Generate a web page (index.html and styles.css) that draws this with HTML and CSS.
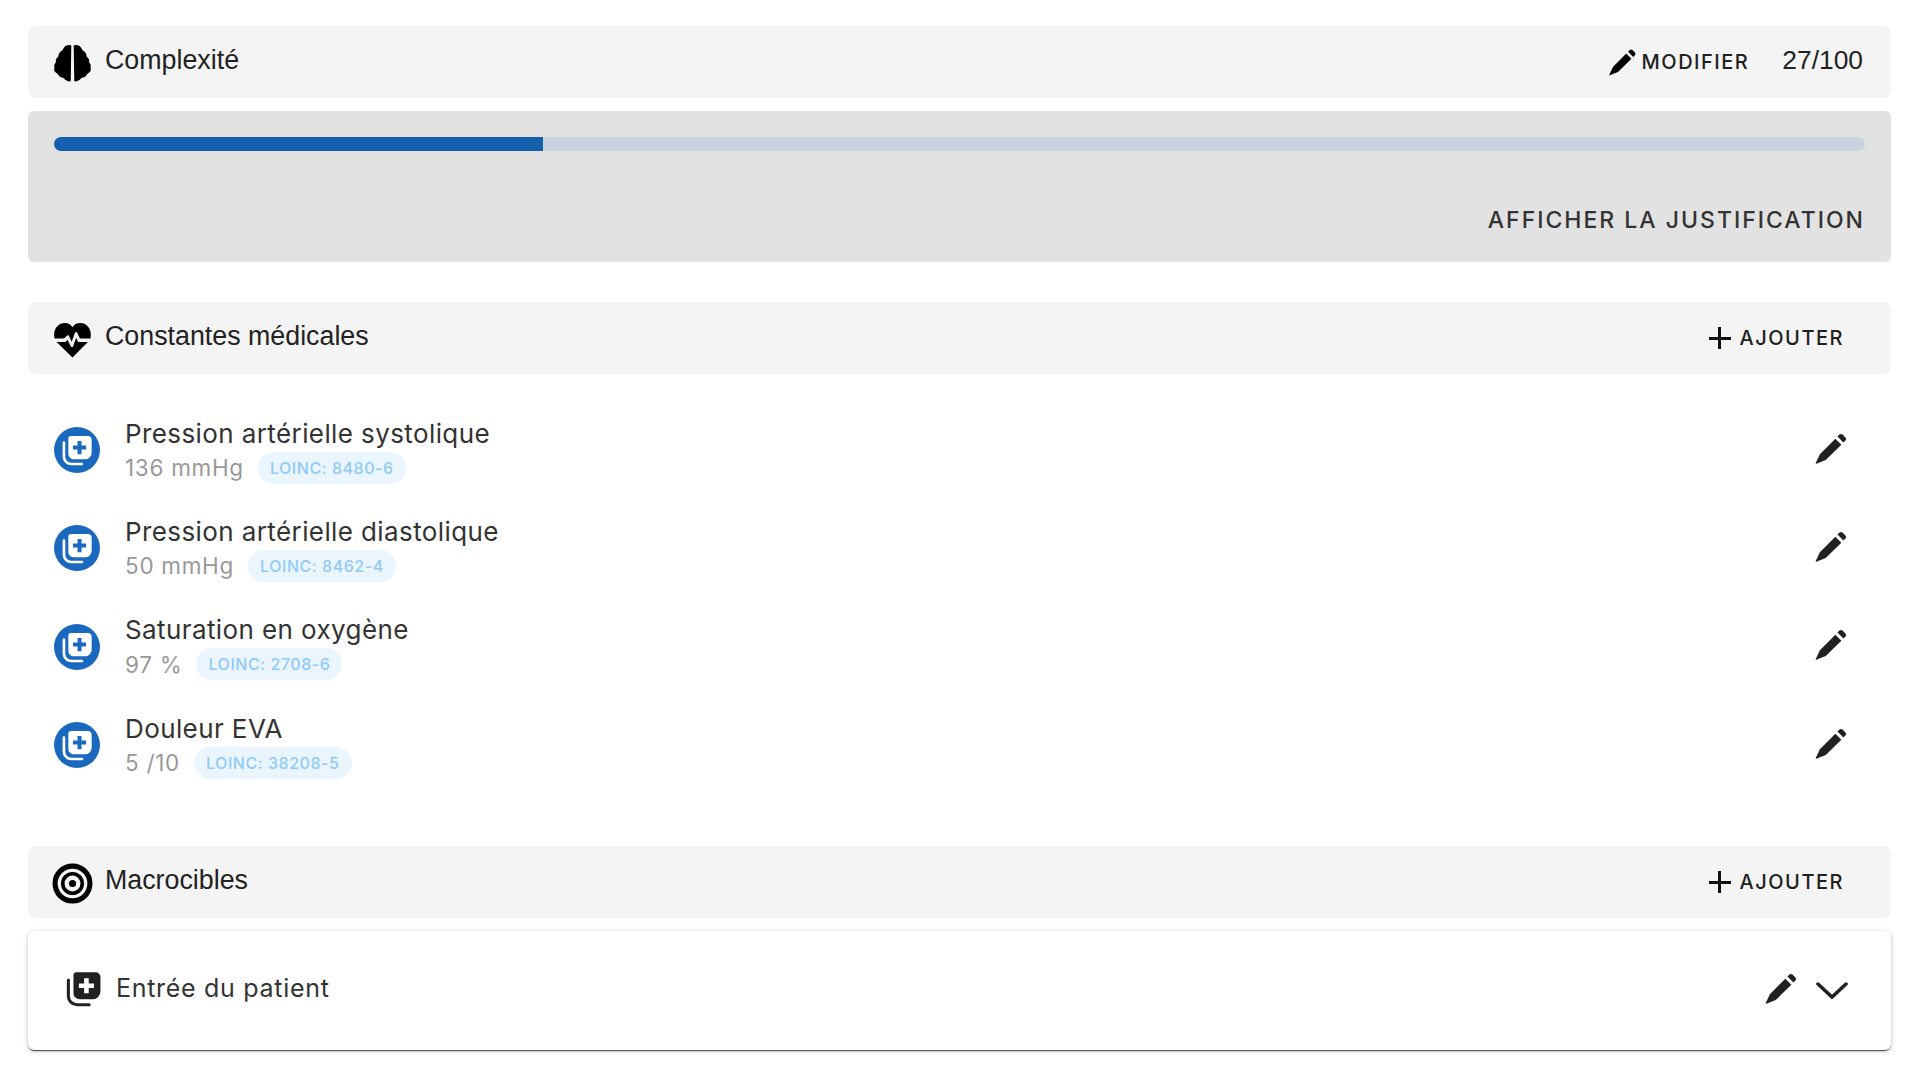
FILE: index.html
```html
<!DOCTYPE html>
<html lang="fr">
<head>
    <meta charset="UTF-8">
    <title>Dossier patient</title>
    <link rel="stylesheet" href="styles.css">
</head>
<body>

<svg class="defs" width="0" height="0">
    <symbol id="pencil" viewBox="0 0 24 24">
        <path d="M2.2 21.8c-.3.1-.5-.1-.4-.4L4.600 15.500 14.900 5.100 18.900 9.100 8.500 19.400z"/>
        <path d="M16.300 3.700l1.300-1.300c.6-.6 1.500-.6 2.100 0l1.900 1.900c.6.6.6 1.500 0 2.100l-1.300 1.300z"/>
    </symbol>
    <symbol id="stack-plus" viewBox="0 0 24 24">
        <path d="M7.500 1.500h12.500a3 3 0 0 1 3 3v9.500a5 5 0 0 1-5 5h-8.500a4 4 0 0 1-4-4V3.500a2 2 0 0 1 2-2zM12.400 5.300v3.400H9v3h3.400v3.400h3v-3.400h3.400v-3h-3.400V5.300z" fill-rule="evenodd" stroke="none"/>
        <path d="M2.200 6.500v10.500a5.500 5.500 0 0 0 5.500 5.500h8" fill="none" stroke-width="2" stroke-linecap="round"/>
    </symbol>
</svg>

<div class="page">
    <div class="section-head">
        <svg class="head-icon" viewBox="0 0 40 40">
            <path d="M18.800 2.500c-.4-.3-1-.5-1.800-.5-2.800 0-5.300 1.500-6.300 4-.2.600-.4 1-.9 1.300-2 1.200-3.400 3-3.500 5.100 0 .7-.3 1.100-.8 1.500-1.400 1.200-1.900 2.700-1.700 4 .1.700 0 1.100-.5 1.700-1 1.100-1.400 2.500-1 4 .2.600.1 1-.1 1.600-.5 1.800.6 3.500 2.400 4.200.6.300.9.600 1.200 1.200 1 2 2.600 3.100 4.600 3.300.6.100 1 .4 1.400.8 1.300 1.700 3.500 2.800 5.200 2.800.6 0 1-.2 1.300-.5z"/>
            <path d="M21.200 2.500c.4-.3 1-.5 1.800-.5 2.800 0 5.300 1.500 6.300 4 .2.600.4 1 .9 1.300 2 1.200 3.400 3 3.500 5.100 0 .7.300 1.100.8 1.500 1.400 1.200 1.900 2.700 1.700 4-.1.700 0 1.100.5 1.700 1 1.100 1.400 2.500 1 4-.2.600-.1 1 .1 1.600.5 1.800-.6 3.500-2.400 4.200-.6.300-.9.600-1.200 1.200-1 2-2.600 3.100-4.600 3.300-.6.100-1 .4-1.400.8-1.300 1.700-3.500 2.800-5.200 2.800-.6 0-1-.2-1.300-.5z"/>
        </svg>
        <span class="head-title">Complexité</span>
        <button class="text-btn modify-btn">
            <svg class="btn-pencil"><use href="#pencil"/></svg>
            MODIFIER
        </button>
        <span class="score">27/100</span>
    </div>

    <div class="score-panel">
        <div class="track"><div class="fill" style="width: 27%"></div></div>
        <button class="justify-btn">AFFICHER LA JUSTIFICATION</button>
    </div>

    <div class="section-head spaced">
        <svg class="head-icon" viewBox="0 0 40 40">
            <path d="M2.500 19C.500 10 6 4 12.500 4c3.300 0 5.900 1.500 7.500 4 1.600-2.500 4.200-4 7.500-4C34 4 39.500 10 37.500 19H27.200l-2.500-5.500c-.5-1-2-1-2.400.1l-3.100 8.600-2.600-5.500c-.5-.9-1.700-1-2.300-.2L11.700 19z"/>
            <path d="M4.500 22.500h8.600l2-2.200 3.100 6.300c.5 1 2 1 2.400-.1l3-8.300 1.300 3c.3.700.9 1.300 1.700 1.300h8.400L20 37.500z"/>
        </svg>
        <span class="head-title">Constantes médicales</span>
        <button class="text-btn add-btn"><span class="plus"></span>AJOUTER</button>
    </div>

    <ul class="vitals">
        <li class="vital">
            <span class="vital-icon"><svg><use href="#stack-plus"/></svg></span>
            <div class="vital-text">
                <div class="vital-name">Pression artérielle systolique</div>
                <div class="vital-sub">136 mmHg <span class="loinc">LOINC: 8480-6</span></div>
            </div>
            <svg class="row-pencil"><use href="#pencil"/></svg>
        </li>
        <li class="vital">
            <span class="vital-icon"><svg><use href="#stack-plus"/></svg></span>
            <div class="vital-text">
                <div class="vital-name">Pression artérielle diastolique</div>
                <div class="vital-sub">50 mmHg <span class="loinc">LOINC: 8462-4</span></div>
            </div>
            <svg class="row-pencil"><use href="#pencil"/></svg>
        </li>
        <li class="vital">
            <span class="vital-icon"><svg><use href="#stack-plus"/></svg></span>
            <div class="vital-text">
                <div class="vital-name">Saturation en oxygène</div>
                <div class="vital-sub">97 % <span class="loinc">LOINC: 2708-6</span></div>
            </div>
            <svg class="row-pencil"><use href="#pencil"/></svg>
        </li>
        <li class="vital">
            <span class="vital-icon"><svg><use href="#stack-plus"/></svg></span>
            <div class="vital-text">
                <div class="vital-name">Douleur EVA</div>
                <div class="vital-sub">5 /10 <span class="loinc">LOINC: 38208-5</span></div>
            </div>
            <svg class="row-pencil"><use href="#pencil"/></svg>
        </li>
    </ul>

    <div class="section-head">
        <svg class="head-icon" viewBox="0 0 40 40">
            <circle cx="20" cy="20" r="17" class="ring"/>
            <circle cx="20" cy="20" r="9.500" class="ring thin"/>
            <circle cx="20" cy="20" r="3.500"/>
        </svg>
        <span class="head-title">Macrocibles</span>
        <button class="text-btn add-btn"><span class="plus"></span>AJOUTER</button>
    </div>

    <div class="target-card">
        <svg class="card-icon"><use href="#stack-plus"/></svg>
        <span class="card-title">Entrée du patient</span>
        <svg class="card-pencil"><use href="#pencil"/></svg>
        <svg class="chevron" viewBox="0 0 32 20"><path d="M2 3l14 13L30 3"/></svg>
    </div>
</div>

</body>
</html>
```

FILE: styles.css
```css
* {
    box-sizing: border-box;
}

body {
    margin: 0;
    background: #fff;
    color: #212121;
    font-family: Inter, sans-serif;
}

button {
    border: 0;
    background: none;
    font-family: Inter, sans-serif;
    color: inherit;
    padding: 0;
}

.defs {
    position: absolute;
}

.page {
    padding: 26px 29px 20px 28px;
}

.section-head {
    display: flex;
    align-items: center;
    height: 72px;
    padding: 0 28px 0 24px;
    background: #f4f4f4;
    border-radius: 8px;
}

.section-head.spaced {
    margin-top: 40px;
}

.head-icon {
    width: 41px;
    height: 41px;
    margin-top: 3px;
    fill: #000;
}

.ring {
    fill: none;
    stroke: #000;
    stroke-width: 5;
}

.ring.thin {
    stroke-width: 3.500;
}

.head-title {
    margin-left: 12px;
    margin-bottom: 3px;
    font-family: "Liberation Sans", Arial, sans-serif;
    font-size: 26.800px;
    color: #222;
    flex: 1;
}

.text-btn {
    display: flex;
    align-items: center;
    font-size: 20px;
    font-weight: 500;
    letter-spacing: 1.500px;
}

.modify-btn {
    margin-right: 33px;
}

.btn-pencil {
    width: 31px;
    height: 31px;
    margin-right: 4px;
    fill: #000;
}

.score {
    margin-bottom: 3px;
    font-family: "Liberation Sans", Arial, sans-serif;
    font-size: 26.400px;
    color: #222;
}

.add-btn {
    margin-right: 19px;
}

.plus {
    position: relative;
    width: 22px;
    height: 22px;
    margin-right: 9px;
}

.plus::before,
.plus::after {
    content: "";
    position: absolute;
    background: #111;
}

.plus::before {
    left: 0;
    right: 0;
    top: 9.500px;
    height: 3px;
}

.plus::after {
    top: 0;
    bottom: 0;
    left: 9.500px;
    width: 3px;
}

.score-panel {
    display: flex;
    flex-direction: column;
    height: 151px;
    margin-top: 13px;
    padding: 26px 26px 0 26px;
    background: #e2e2e2;
    border-radius: 6px;
}

.track {
    height: 14px;
    background: #c9d3df;
    border-radius: 7px;
    overflow: hidden;
}

.fill {
    height: 100%;
    background: #1560ac;
}

.justify-btn {
    align-self: flex-end;
    margin-top: 55px;
    font-size: 23px;
    font-weight: 500;
    letter-spacing: 2px;
    color: #333;
}

.vitals {
    list-style: none;
    margin: 0;
    padding: 27px 0 52px;
}

.vital {
    display: flex;
    align-items: center;
    height: 98.300px;
    padding: 0 43px 0 26px;
}

.vital-icon {
    display: flex;
    align-items: center;
    justify-content: center;
    width: 46px;
    height: 46px;
    border-radius: 50%;
    background: #1a69bf;
}

.vital-icon svg {
    width: 32px;
    height: 32px;
    fill: #fff;
    stroke: #fff;
}

.vital-text {
    flex: 1;
    margin-left: 25px;
}

.vital-name {
    margin-top: 1px;
    font-size: 26px;
    letter-spacing: 0.400px;
    color: #333;
    line-height: 32px;
}

.vital-sub {
    display: flex;
    align-items: center;
    gap: 14px;
    margin-top: 2px;
    font-size: 22.500px;
    letter-spacing: 0.700px;
    color: #999;
}

.loinc {
    padding: 0 12px;
    height: 32px;
    line-height: 32px;
    border-radius: 16px;
    background: #ebf5fe;
    color: #90caf9;
    font-size: 16px;
    font-weight: 500;
    letter-spacing: 0.550px;
}

.row-pencil {
    width: 36px;
    height: 36px;
    margin-right: -1px;
    margin-top: -3px;
    fill: #212121;
}

.target-card {
    display: flex;
    align-items: center;
    height: 119px;
    margin-top: 13px;
    padding: 0 43px 5px 37px;
    background: #fff;
    border-radius: 6px;
    box-shadow: 0 2px 1px -1px rgba(0, 0, 0, 0.6), 0 1px 2px rgba(0, 0, 0, 0.25), 0 1px 6px rgba(0, 0, 0, 0.15);
}

.card-icon {
    width: 37px;
    height: 37px;
    fill: #212121;
    stroke: #212121;
}

.card-title {
    flex: 1;
    margin-left: 14px;
    font-size: 25px;
    color: #333;
    letter-spacing: 0.700px;
}

.card-pencil {
    width: 36px;
    height: 36px;
    margin-right: 17px;
    margin-top: 1px;
    fill: #212121;
}

.chevron {
    width: 32px;
    height: 20px;
    margin-top: 6px;
    fill: none;
    stroke: #212121;
    stroke-width: 3.500;
    stroke-linecap: round;
}
```
